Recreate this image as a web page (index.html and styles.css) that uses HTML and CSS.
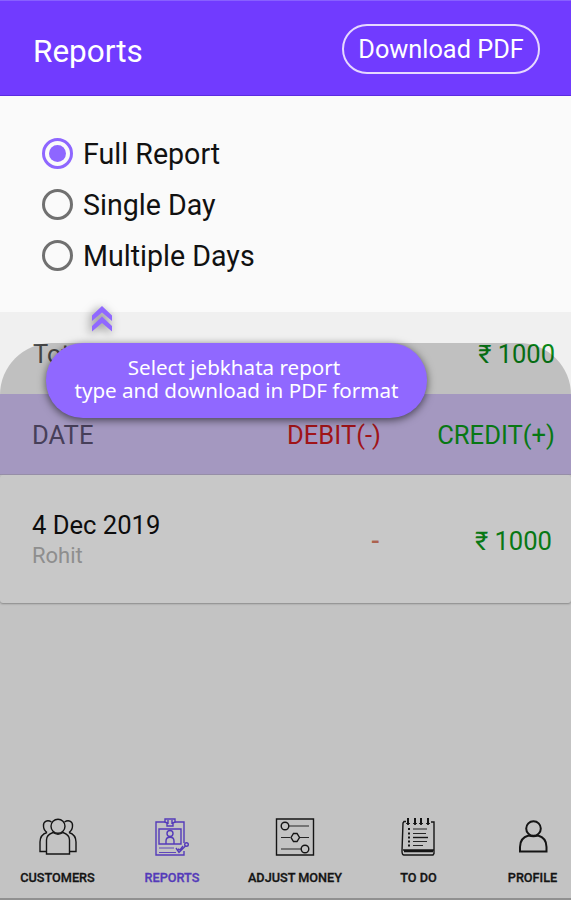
FILE: index.html
```html
<!DOCTYPE html>
<html lang="en">
<head>
    <meta charset="UTF-8">
    <meta name="viewport" content="width=device-width, initial-scale=1.0">
    <title>Reports</title>
    <link rel="stylesheet" href="styles.css">
</head>
<body>
    <header class="topbar">
        <h1>Reports</h1>
        <button class="download-btn">Download PDF</button>
    </header>

    <div class="options">
        <label class="option"><span class="radio checked"></span><span>Full Report</span></label>
        <label class="option"><span class="radio"></span><span>Single Day</span></label>
        <label class="option"><span class="radio"></span><span>Multiple Days</span></label>
    </div>

    <div class="total-row">
        <span>Total</span>
        <span class="credit amount">₹ 1000</span>
    </div>

    <div class="table-head">
        <span class="date">DATE</span>
        <span class="debit">DEBIT(-)</span>
        <span class="credit">CREDIT(+)</span>
    </div>

    <div class="record">
        <div class="who">
            <div class="day">4 Dec 2019</div>
            <div class="name">Rohit</div>
        </div>
        <span class="dash">-</span>
        <span class="credit amount">₹ 1000</span>
    </div>

    <nav class="tabs">
        <a class="tab customers">
            <svg width="40" height="40" viewBox="0 0 40 40">
                <path d="M13.500 5C9 2 5 5 5.500 9c0 3 1.500 5 3.500 6.500M26.500 5C31 2 35 5 34.500 9c0 3-1.500 5-3.500 6.500"/>
                <path d="M9 15.500C4.500 17 2 20 2 25v9.500h6.500M31 15.500c4.500 1.500 7 4.500 7 9.500v9.500h-6.500"/>
                <path d="M8.500 37V23c0-4 2-6 6.500-7.500 3 2 7 2 10 0 4.500 1.500 6.500 3.500 6.500 7.500v14z"/>
                <circle cx="20" cy="9.300" r="7"/>
            </svg>
            <span>CUSTOMERS</span>
        </a>
        <a class="tab reports">
            <svg width="40" height="40" viewBox="0 0 40 40">
                <path d="M13 5H4v33h28V34M32 26V5h-9"/>
                <path d="M13 2h10v3l-2 1v3h-6V6l-2-1zM16 3v4M20 3v4"/>
                <path d="M7 12h22v15H7z"/>
                <circle cx="18" cy="16.500" r="3"/>
                <path d="M14 27v-3c0-5 8-5 8 0v3"/>
                <path class="thin" d="M7 31h15M7 35.500h17"/>
                <path d="M24 31l3 4.500 6.500-6.500M26 32l2 1 3-4"/>
                <circle cx="34.500" cy="27.500" r="1.800"/>
            </svg>
            <span>REPORTS</span>
        </a>
        <a class="tab adjust">
            <svg width="40" height="40" viewBox="0 0 40 40">
                <path d="M1.500 2h37v36h-37z"/>
                <path class="thin" d="M14 9h20M6 20.500h9M24.500 20.500H34M6 32h20"/>
                <circle cx="10" cy="9" r="3.800"/>
                <path d="M16 20.500l2.500-4h3.500l2.500 4-2.500 4h-3.500z"/>
                <circle cx="30" cy="32" r="3.800"/>
            </svg>
            <span>ADJUST MONEY</span>
        </a>
        <a class="tab todo">
            <svg width="40" height="40" viewBox="0 0 40 40">
                <path d="M7 4.500H5L4 6 3 34c0 3 1 4 2 4h29l1-1.500V5h-3M4 33h31M5 34.500h29"/>
                <path class="ring" d="M9 1v6M16 1v6M22 1v6M29 1v6"/>
                <path class="thin" d="M7 6l2 2 2-2M14 6l2 2 2-2M20 6l2 2 2-2M27 6l2 2 2-2"/>
                <path class="thin" d="M14 12h14M14 16.500h13M14 24.500h14M14 28.500h10"/>
                <path d="M14 20.500h15"/>
                <path class="dots" d="M9 12h2M9 16.500h2M9 20.500h2M9 24.500h2M9 28.500h2"/>
            </svg>
            <span>TO DO</span>
        </a>
        <a class="tab profile">
            <svg width="40" height="40" viewBox="0 0 40 40">
                <circle cx="20.500" cy="11.500" r="7.300"/>
                <path d="M15.500 18.500C10 20 7 24 7 30v4.500h26.500V30c0-6-3-10-8.500-11.500-3 1-6 1-9.500 0z"/>
            </svg>
            <span>PROFILE</span>
        </a>
    </nav>

    <!-- dimmed layer behind the hint -->
    <div class="dim"></div>

    <svg class="hint-arrow" width="20" height="26" viewBox="0 0 20 26">
        <path d="M0 9.500L10 0l10 9.500v5.500L10 6.500 0 15z"/>
        <path d="M0 20L10 10.500 20 20v5.500L10 17 0 25.500z"/>
    </svg>
    <div class="hint"><span class="first">Select jebkhata report</span><br>type and download in PDF format</div>
</body>
</html>
```
FILE: styles.css
```css
* {
    box-sizing: border-box;
}

body {
    position: relative;
    display: flex;
    flex-direction: column;
    height: 900px;
    margin: 0;
    overflow: hidden;
    background: #f4f4f4;
    font-family: Roboto, sans-serif;
    color: #111;
}

.topbar {
    display: flex;
    justify-content: space-between;
    align-items: center;
    height: 96px;
    padding: 3px 31px 0 33px;
    background: #713bff;
    border-top: 1px solid #8860ff;
    border-bottom: 1px solid #5b2be0;
    color: #fff;
}

.topbar h1 {
    margin: 3px 0 0;
    font-size: 31.5px;
    font-weight: 400;
}

.download-btn {
    width: 198px;
    height: 50px;
    margin-bottom: 2px;
    padding: 1px 0 0;
    border: 2px solid #e6d8ff;
    border-radius: 25px;
    background: none;
    color: #fff;
    font: 25.3px Roboto, sans-serif;
    white-space: nowrap;
}

.options {
    height: 216px;
    padding: 32px 42px;
    background: #fafafa;
}

.option {
    display: flex;
    align-items: center;
    gap: 10px;
    height: 51px;
    font-size: 28.6px;
    line-height: 34px;
    padding-bottom: 1px;
}

.option span:last-child {
    padding-top: 2px;
}

.radio {
    width: 31px;
    height: 31px;
    border: 3px solid #707070;
    border-radius: 50%;
}

.radio.checked {
    display: flex;
    align-items: center;
    justify-content: center;
    border-color: #8e66ff;
}

.radio.checked::after {
    content: "";
    width: 17px;
    height: 17px;
    border-radius: 50%;
    background: #8e66ff;
}

.total-row {
    display: flex;
    justify-content: space-between;
    height: 82px;
    padding: 27px 16px 0 33px;
    background: #f0f0f0;
    font-size: 25.5px;
    line-height: 30px;
    color: #555;
}

.credit {
    color: #0a961a;
}

.total-row .credit {
    color: #088818;
}

.table-head {
    display: grid;
    grid-template-columns: 1fr 94px 174px;
    align-items: center;
    height: 81px;
    padding: 2px 16px 0 32px;
    background: #cdbff1;
    border-bottom: 1px solid #bdb3d3;
    font-size: 25.6px;
}

.table-head .date {
    color: #594f70;
}

.table-head .debit {
    color: #c81a20;
}

.table-head .credit {
    text-align: right;
}

.record {
    display: grid;
    grid-template-columns: 1fr 16px 165px;
    align-items: center;
    height: 128px;
    padding: 3px 19px 0 32px;
    background: #fbfbfb;
    border-radius: 3px;
    box-shadow: 0 1px 2px #aaa;
    font-size: 25.6px;
}

.record .who {
    padding-bottom: 2px;
}

.record .day {
    line-height: 31px;
}

.record .name {
    font-size: 22px;
    line-height: 29px;
    color: #b2b2b2;
}

.record .dash {
    color: #d77b63;
    font-weight: 500;
}

.record .amount {
    text-align: right;
}

.tabs {
    display: grid;
    grid-template-columns: 115px 114px 132px 115px 113px;
    height: 83px;
    margin-top: auto;
    border-bottom: 2px solid #b5b5b5;
}

.tab {
    display: flex;
    flex-direction: column;
    align-items: center;
    color: #1a1a1a;
    font-size: 12.7px;
    font-weight: 500;
    line-height: 16px;
    -webkit-text-stroke: 0.3px currentColor;
    white-space: nowrap;
}

.tab svg {
    display: block;
    margin-bottom: 13px;
    fill: none;
    stroke: currentColor;
    stroke-width: 1.4;
}

.tab .thin {
    stroke-width: 0.9;
}

.tab .ring,
.tab .dots {
    stroke-width: 2;
}

.tab.reports {
    color: #6a4ae8;
}

.tab.profile svg {
    stroke-width: 2;
}

.dim {
    position: absolute;
    top: 343px;
    left: 0;
    right: 0;
    bottom: 0;
    border-radius: 52px 52px 0 0;
    background: rgba(0, 0, 0, 0.2);
}

.hint-arrow {
    position: absolute;
    top: 306px;
    left: 92px;
    fill: #9068ff;
    overflow: visible;
    filter: drop-shadow(-2px 2px 5px rgba(0, 0, 0, 0.5));
}

.hint {
    position: absolute;
    top: 343px;
    left: 46px;
    width: 381px;
    height: 75px;
    padding-top: 13px;
    border-radius: 37px;
    background: #9068ff;
    box-shadow: 0 2px 9px rgba(0, 0, 0, 0.6);
    color: #fff;
    font: 20.6px/23px "Noto Sans", sans-serif;
    text-align: center;
    white-space: nowrap;
}

.hint .first {
    margin-right: 5px;
}
```
